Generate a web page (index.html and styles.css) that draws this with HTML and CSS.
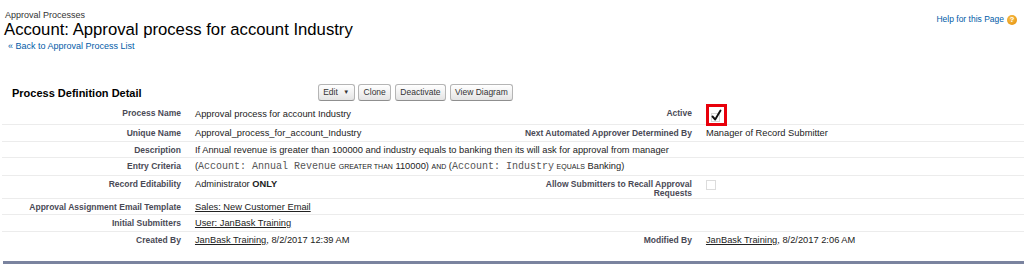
FILE: index.html
```html
<!DOCTYPE html>
<html>
<head>
<meta charset="utf-8">
<link rel="stylesheet" href="styles.css">
</head>
<body>
<div class="page">
  <div class="page-title">
    <div class="pt-content">
      <div class="page-type">Approval Processes</div>
      <h1 class="page-desc">Account: Approval process for account Industry</h1>
      <div class="breadcrumb">« <a href="#">Back to Approval Process List</a></div>
    </div>
    <div class="pt-links">
      <a href="#">Help for this Page</a>
      <span class="help-icon">?</span>
    </div>
  </div>

  <div class="block">
    <div class="pb-header">
      <h2 class="pb-title">Process Definition Detail</h2>
      <div class="pb-buttons">
        <button class="btn">Edit <span class="caret">▼</span></button>
        <button class="btn">Clone</button>
        <button class="btn">Deactivate</button>
        <button class="btn">View Diagram</button>
      </div>
    </div>
    <table class="detail">
      <colgroup>
        <col class="c-label"><col class="c-data"><col class="c-label"><col class="c-data">
      </colgroup>
      <tr class="row-mid">
        <td class="label">Process Name</td>
        <td class="data">Approval process for account Industry</td>
        <td class="label">Active</td>
        <td class="data">
          <span class="highlight">
            <svg width="15" height="16" viewBox="0 0 15 16">
              <rect x="2.5" y="6.5" width="8" height="8" fill="none" stroke="#d8d8d8" stroke-width="1"/>
              <path d="M3.5 9.5 L6.2 12.5 L11.5 3.5" fill="none" stroke="#111" stroke-width="1.9" stroke-linecap="round" stroke-linejoin="round"/>
            </svg>
          </span>
        </td>
      </tr>
      <tr>
        <td class="label">Unique Name</td>
        <td class="data">Approval_process_for_account_Industry</td>
        <td class="label">Next Automated Approver Determined By</td>
        <td class="data">Manager of Record Submitter</td>
      </tr>
      <tr>
        <td class="label">Description</td>
        <td class="data" colspan="3">If Annual revenue is greater than 100000 and industry equals to banking then its will ask for approval from manager</td>
      </tr>
      <tr>
        <td class="label">Entry Criteria</td>
        <td class="data" colspan="3">(<span class="mono">Account: Annual Revenue</span> <span class="op">GREATER THAN</span> 110000) <span class="op">AND</span> (<span class="mono">Account: Industry</span> <span class="op">EQUALS</span> Banking)</td>
      </tr>
      <tr>
        <td class="label">Record Editability</td>
        <td class="data">Administrator <b>ONLY</b></td>
        <td class="label">Allow Submitters to Recall Approval Requests</td>
        <td class="data"><span class="checkbox"></span></td>
      </tr>
      <tr>
        <td class="label">Approval Assignment Email Template</td>
        <td class="data" colspan="3"><a href="#" class="ref">Sales: New Customer Email</a></td>
      </tr>
      <tr>
        <td class="label">Initial Submitters</td>
        <td class="data" colspan="3"><a href="#" class="ref">User: JanBask Training</a></td>
      </tr>
      <tr class="last">
        <td class="label">Created By</td>
        <td class="data"><a href="#" class="ref">JanBask Training</a>, 8/2/2017 12:39 AM</td>
        <td class="label">Modified By</td>
        <td class="data"><a href="#" class="ref">JanBask Training</a>, 8/2/2017 2:06 AM</td>
      </tr>
    </table>
  </div>
  <div class="next-block"></div>
</div>
</body>
</html>
```

FILE: styles.css
```css
html, body {
  margin: 0;
  padding: 0;
  background: #fff;
}
body {
  font-family: "Liberation Sans", Arial, sans-serif;
  color: #222;
}
.page {
  padding: 0 0 0 2px;
}
.page-title {
  display: flex;
  justify-content: space-between;
  align-items: flex-start;
  padding-top: 10px;
}
.pt-content {
  padding-left: 2px;
}
.page-type {
  font-size: 9px;
  line-height: 11px;
  color: #333;
  padding-left: 1px;
}
.page-desc {
  margin: 0;
  font-size: 16.7px;
  line-height: 18px;
  font-weight: normal;
  color: #000;
}
.breadcrumb {
  margin-top: 2px;
  padding-left: 4px;
  font-size: 9px;
  line-height: 11px;
  color: #015ba7;
}
.breadcrumb a {
  color: #015ba7;
  text-decoration: none;
}
.pt-links {
  display: flex;
  align-items: center;
  gap: 3px;
  padding-top: 4px;
  padding-right: 7px;
  font-size: 8.5px;
  line-height: 11px;
}
.pt-links a {
  color: #015ba7;
  text-decoration: none;
}
.help-icon {
  display: inline-flex;
  align-items: center;
  justify-content: center;
  width: 10px;
  height: 10px;
  border-radius: 50%;
  background: radial-gradient(circle at 40% 35%, #f8c04a, #e38b06);
  color: #fff;
  font-size: 7.5px;
  font-weight: bold;
  line-height: 10px;
}
.block {
  margin-top: 31px;
  padding-bottom: 14px;
}
.pb-header {
  display: flex;
  align-items: center;
  padding: 1px 0;
}
.pb-title {
  width: 30.2%;
  box-sizing: border-box;
  margin: 0;
  padding-left: 10px;
  font-size: 11px;
  font-weight: bold;
  color: #000;
}
.pb-buttons {
  display: flex;
  gap: 3.5px;
  margin-left: 7px;
}
.btn {
  font-family: "Liberation Sans", Arial, sans-serif;
  font-size: 8.5px;
  color: #333;
  height: 17px;
  padding: 0 4.5px;
  border: 1px solid #b5b5b5;
  border-bottom-color: #8f8f8f;
  border-radius: 3px;
  background: linear-gradient(#ffffff, #f2f2f2 50%, #e4e4e4);
  line-height: 15px;
}
.caret {
  font-size: 6px;
  margin-left: 3px;
  vertical-align: 1px;
}
.detail {
  width: 100%;
  border-collapse: collapse;
  table-layout: fixed;
}
.c-label { width: 18%; }
.c-data { width: 32%; }
.detail td {
  border-bottom: 1px solid #ececec;
  vertical-align: top;
  padding: 3px 0 2px;
}
.detail tr.last td {
  border-bottom: none;
}
.detail tr.row-mid td {
  vertical-align: middle;
  padding: 2px 0 0;
}
.label {
  text-align: right;
  font-size: 8.5px;
  line-height: 9px;
  font-weight: bold;
  color: #4a4a56;
  padding-right: 5px !important;
  padding-top: 4px !important;
  padding-bottom: 0 !important;
}
.detail tr.row-mid td.label {
  padding-top: 1px !important;
}
.data {
  font-size: 9.3px;
  line-height: 10.5px;
  color: #222;
  padding-left: 9px !important;
}
.data b {
  font-weight: bold;
}
.mono {
  font-family: "Liberation Mono", "Courier New", monospace;
  font-size: 10px;
  color: #555;
}
.op {
  font-size: 7px;
  text-transform: uppercase;
}
.ref {
  color: #222;
  text-decoration: underline;
}
.highlight {
  display: inline-flex;
  align-items: center;
  justify-content: center;
  width: 15px;
  height: 16px;
  border: 3px solid #e8000b;
  vertical-align: top;
  margin-bottom: -2px;
}
.checkbox {
  display: inline-block;
  width: 8px;
  height: 8px;
  border: 1px solid #dcdcdc;
  margin-top: 1px;
}
.next-block {
  margin-left: 1px;
  border-top: 3px solid #7a839f;
}
```
